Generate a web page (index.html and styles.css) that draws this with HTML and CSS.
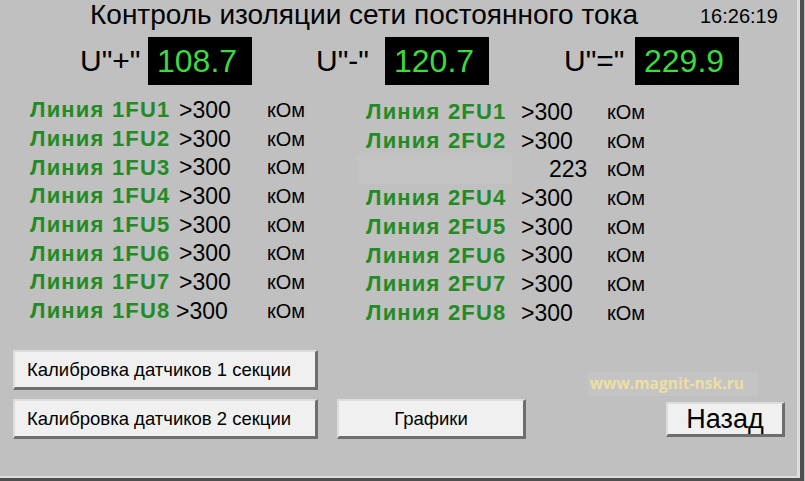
FILE: index.html
```html
<!DOCTYPE html>
<html lang="ru">
<head>
<meta charset="utf-8">
<title>Контроль изоляции</title>
<link rel="stylesheet" href="styles.css">
</head>
<body>
<div class="frame">
  <div class="inner">
    <header class="header">
      <h1 class="title">Контроль изоляции сети постоянного тока</h1>
      <div class="clock">16:26:19</div>
    </header>

    <section class="readouts">
      <div class="readout r1"><span class="ulabel">U"+"</span><span class="screen">108.7</span></div>
      <div class="readout r2"><span class="ulabel">U"-"</span><span class="screen">120.7</span></div>
      <div class="readout r3"><span class="ulabel">U"="</span><span class="screen">229.9</span></div>
    </section>

    <section class="lines">
      <div class="group g1">
        <div class="row"><span class="name">Линия 1FU1</span><span class="val">&gt;300</span><span class="unit">кОм</span></div>
        <div class="row"><span class="name">Линия 1FU2</span><span class="val">&gt;300</span><span class="unit">кОм</span></div>
        <div class="row"><span class="name">Линия 1FU3</span><span class="val">&gt;300</span><span class="unit">кОм</span></div>
        <div class="row"><span class="name">Линия 1FU4</span><span class="val">&gt;300</span><span class="unit">кОм</span></div>
        <div class="row"><span class="name">Линия 1FU5</span><span class="val">&gt;300</span><span class="unit">кОм</span></div>
        <div class="row"><span class="name">Линия 1FU6</span><span class="val">&gt;300</span><span class="unit">кОм</span></div>
        <div class="row"><span class="name">Линия 1FU7</span><span class="val">&gt;300</span><span class="unit">кОм</span></div>
        <div class="row"><span class="name">Линия 1FU8</span><span class="val shift">&gt;300</span><span class="unit">кОм</span></div>
      </div>
      <div class="group g2">
        <div class="row"><span class="name">Линия 2FU1</span><span class="val">&gt;300</span><span class="unit">кОм</span></div>
        <div class="row"><span class="name">Линия 2FU2</span><span class="val">&gt;300</span><span class="unit">кОм</span></div>
        <div class="row"><span class="name blank"></span><span class="val num">223</span><span class="unit">кОм</span></div>
        <div class="row"><span class="name">Линия 2FU4</span><span class="val">&gt;300</span><span class="unit">кОм</span></div>
        <div class="row"><span class="name">Линия 2FU5</span><span class="val">&gt;300</span><span class="unit">кОм</span></div>
        <div class="row"><span class="name">Линия 2FU6</span><span class="val">&gt;300</span><span class="unit">кОм</span></div>
        <div class="row"><span class="name">Линия 2FU7</span><span class="val">&gt;300</span><span class="unit">кОм</span></div>
        <div class="row"><span class="name">Линия 2FU8</span><span class="val">&gt;300</span><span class="unit">кОм</span></div>
      </div>
    </section>

    <section class="controls">
      <div class="calib">
        <button class="btn btn-calib">Калибровка датчиков 1 секции</button>
        <button class="btn btn-calib">Калибровка датчиков 2 секции</button>
      </div>
      <button class="btn btn-graph">Графики</button>
      <div class="right">
        <div class="watermark">www.magnit-nsk.ru</div>
        <button class="btn btn-back">Назад</button>
      </div>
    </section>
  </div>
</div>
</body>
</html>
```

FILE: styles.css
```css
* { box-sizing: border-box; }

html, body {
  margin: 0;
  padding: 0;
  background: #c0c0c0;
}

body {
  width: 805px;
  height: 481px;
  overflow: hidden;
  font-family: "Liberation Sans", Arial, sans-serif;
  color: #000;
}

.frame {
  width: 804px;
  height: 481px;
  border-right: 4px solid #4e4e4e;
  border-bottom: 3px solid #4e4e4e;
}

.inner {
  width: 100%;
  height: 100%;
  border-right: 3px solid #dedede;
  border-bottom: 2px solid #dedede;
  display: flex;
  flex-direction: column;
}

.header {
  display: flex;
  align-items: flex-end;
  height: 30px;
  padding-left: 90px;
}

.title {
  margin: 0;
  font-weight: normal;
  font-size: 28px;
  line-height: 30px;
  white-space: nowrap;
  width: 610px;
}

.clock {
  font-size: 20px;
  line-height: 24px;
  margin-bottom: 2px;
}

.readouts {
  display: flex;
  padding-left: 80px;
  margin-top: 7px;
  height: 48px;
}

.readout {
  display: flex;
  align-items: center;
}

.r1 { width: 236px; }
.r2 { width: 248px; }

.ulabel {
  font-size: 30px;
  white-space: pre;
}

.r1 .ulabel { width: 68px; }
.r2 .ulabel { width: 69px; }
.r3 .ulabel { width: 71px; }

.screen {
  width: 104px;
  height: 48px;
  background: #000;
  color: #3fd83f;
  font-size: 32px;
  line-height: 48px;
  padding-left: 9px;
}

.lines {
  display: flex;
  margin-top: 11px;
  padding-left: 30px;
}

.group {
  display: flex;
  flex-direction: column;
}

.g1 { width: 336px; }
.g2 { margin-top: 2px; }

.row {
  display: flex;
  align-items: center;
  height: 28.7px;
}

.name {
  color: #238b23;
  font-weight: bold;
  font-size: 22px;
  letter-spacing: 1.2px;
  white-space: nowrap;
}

.g1 .name { width: 149px; }
.g2 .name { width: 155px; }

.blank {
  height: 29px;
  margin-left: -9px;
  margin-right: 9px;
  background: #c3c3c3;
}

.val {
  font-size: 23px;
  white-space: nowrap;
}

.g1 .val { width: 88px; }
.g2 .val { width: 86px; }

.val.shift { margin-left: -3px; margin-right: 3px; }

.val.num { padding-left: 28px; }

.unit {
  font-size: 20px;
  white-space: nowrap;
}

.controls {
  display: flex;
  align-items: flex-end;
  margin-top: auto;
  padding-left: 13px;
  padding-bottom: 37px;
}

.calib {
  display: flex;
  flex-direction: column;
  gap: 9px;
}

.btn {
  font-family: "Liberation Sans", Arial, sans-serif;
  color: #000;
  background: #f0f0f0;
  border-style: solid;
  border-width: 2px 3px 3px 2px;
  border-color: #dcdcdc #6e6e6e #6e6e6e #dcdcdc;
  padding: 0;
  margin: 0;
  cursor: pointer;
}

.btn-calib {
  width: 305px;
  height: 40px;
  font-size: 18.5px;
  text-align: left;
  padding-left: 12px;
}

.btn-graph {
  width: 189px;
  height: 40px;
  font-size: 18.5px;
  margin-left: 19px;
}

.right {
  margin-left: auto;
  margin-right: 12px;
  display: flex;
  flex-direction: column;
  align-items: flex-end;
}

.watermark {
  font-family: "Open Sans", "DejaVu Sans", sans-serif;
  font-weight: bold;
  font-size: 15.6px;
  color: #ecdfa2;
  background: #c4c4c4;
  padding: 2px 14px 4px 2px;
  margin-right: 27px;
  margin-bottom: 6px;
  line-height: 18px;
}

.btn-back {
  width: 119px;
  height: 35px;
  font-size: 27px;
  line-height: 30px;
  margin-bottom: 2px;
}
```
